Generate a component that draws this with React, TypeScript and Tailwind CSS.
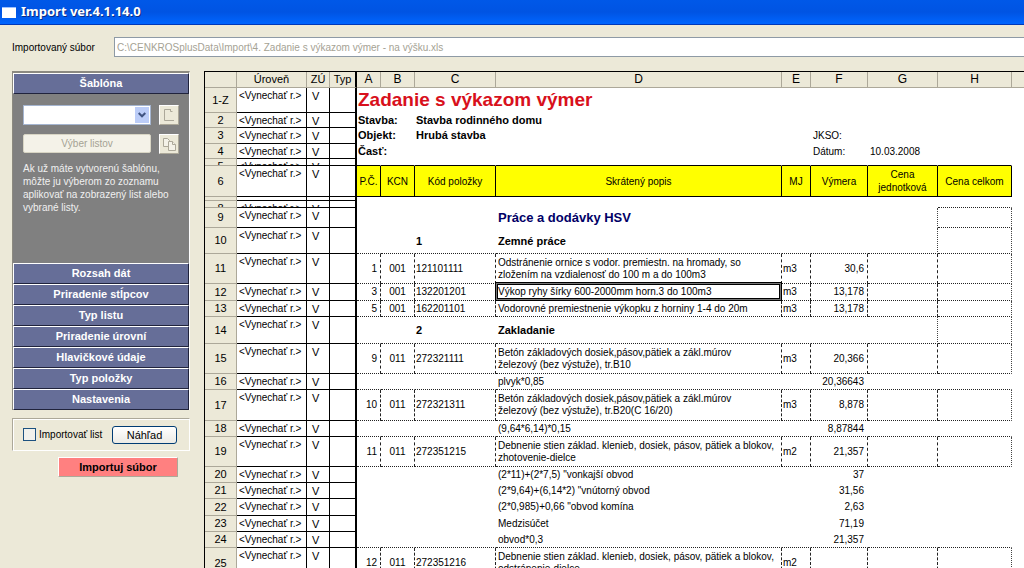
import React from "react";

type Kind = "blank" | "head" | "section" | "item" | "calc";

interface Row {
  n: string;
  h: string;
  kind: Kind;
  cells?: Partial<Record<Col, React.ReactNode>>;
  bottom?: "all" | "solid" | "last";
  box?: boolean;
  short?: boolean;
  collapsed?: boolean;
  selected?: boolean;
}

type Col = "A" | "B" | "C" | "D" | "E" | "F" | "G" | "H";

const COLS: Col[] = ["A", "B", "C", "D", "E", "F", "G", "H"];

function Bold({ children }: { children: React.ReactNode }) {
  return <b className="text-[11px]">{children}</b>;
}

const item = (
  n: string,
  h: string,
  a: string,
  b: string,
  c: string,
  d: string,
  e: string,
  f: string,
  selected = false
): Row => ({
  n,
  h,
  kind: "item",
  bottom: "all",
  selected,
  cells: { A: a, B: b, C: c, D: d, E: e, F: f },
});

const calc = (n: string, h: string, d: string, f: string, bottom?: "all"): Row => ({
  n,
  h,
  kind: "calc",
  bottom,
  cells: { D: d, F: f },
});

const ROWS: Row[] = [
  {
    n: "1-Z",
    h: "h-[25px]",
    kind: "blank",
    cells: {
      A: <span className="text-[19px] font-bold text-[#d8101c]">Zadanie s výkazom výmer</span>,
    },
  },
  { n: "2", h: "h-[15px]", kind: "blank", cells: { A: <Bold>Stavba:</Bold>, C: <Bold>Stavba rodinného domu</Bold> } },
  { n: "3", h: "h-[16px]", kind: "blank", cells: { A: <Bold>Objekt:</Bold>, C: <Bold>Hrubá stavba</Bold>, F: "JKSO:" } },
  { n: "4", h: "h-[15px]", kind: "blank", cells: { A: <Bold>Časť:</Bold>, F: "Dátum:", G: "10.03.2008" } },
  { n: "5", h: "h-[7px]", kind: "blank", short: true, bottom: "solid" },
  {
    n: "6",
    h: "h-[31px]",
    kind: "head",
    bottom: "solid",
    cells: {
      A: "P.Č.",
      B: "KCN",
      C: "Kód položky",
      D: "Skrátený popis",
      E: "MJ",
      F: "Výmera",
      G: "Cena jednotková",
      H: "Cena celkom",
    },
  },
  { n: "7", h: "h-[4px]", kind: "blank", collapsed: true },
  { n: "8", h: "h-[7px]", kind: "blank", short: true, bottom: "last" },
  {
    n: "9",
    h: "h-[20px]",
    kind: "section",
    box: true,
    bottom: "last",
    cells: {
      D: <span className="text-[13px] font-bold text-[#000066]">Práce a dodávky HSV</span>,
    },
  },
  { n: "10", h: "h-[26px]", kind: "section", box: true, bottom: "all", cells: { C: <Bold>1</Bold>, D: <Bold>Zemné práce</Bold> } },
  item("11", "h-[30px]", "1", "001", "121101111", "Odstránenie ornice s vodor. premiestn. na hromady, so\nzložením na vzdialenosť do 100 m a do 100m3", "m3", "30,6"),
  item("12", "h-[17px]", "3", "001", "132201201", "Výkop ryhy šírky 600-2000mm horn.3 do 100m3", "m3", "13,178", true),
  item("13", "h-[16px]", "5", "001", "162201101", "Vodorovné premiestnenie výkopku z horniny 1-4 do 20m", "m3", "13,178"),
  { n: "14", h: "h-[27px]", kind: "section", box: true, bottom: "all", cells: { C: <Bold>2</Bold>, D: <Bold>Zakladanie</Bold> } },
  item("15", "h-[30px]", "9", "011", "272321111", "Betón základových dosiek,pásov,pätiek a zákl.múrov\nželezový (bez výstuže), tr.B10", "m3", "20,366"),
  calc("16", "h-[16px]", "plvyk*0,85", "20,36643", "all"),
  item("17", "h-[31px]", "10", "011", "272321311", "Betón základových dosiek,pásov,pätiek a zákl.múrov\nželezový (bez výstuže), tr.B20(C 16/20)", "m3", "8,878"),
  calc("18", "h-[16px]", "(9,64*6,14)*0,15", "8,87844", "all"),
  item("19", "h-[30px]", "11", "011", "272351215", "Debnenie stien základ. klenieb, dosiek, pásov, pätiek a blokov,\nzhotovenie-dielce", "m2", "21,357"),
  calc("20", "h-[16px]", '(2*11)+(2*7,5) "vonkajší obvod', "37"),
  calc("21", "h-[16px]", '(2*9,64)+(6,14*2) "vnútorný obvod', "31,56"),
  calc("22", "h-[17px]", '(2*0,985)+0,66 "obvod komína', "2,63"),
  calc("23", "h-[16px]", "Medzisúčet", "71,19"),
  calc("24", "h-[16px]", "obvod*0,3", "21,357", "all"),
  item("25", "h-[31px]", "12", "011", "272351216", "Debnenie stien základ. klenieb, dosiek, pásov, pätiek a blokov,\nodstránenie-dielce", "m2", ""),
];

const ALIGN: Record<Col, string> = {
  A: "justify-end pr-[3px]",
  B: "justify-center",
  C: "pl-px",
  D: "pl-[2px]",
  E: "pl-px",
  F: "justify-end pr-[3px]",
  G: "pl-px",
  H: "pl-px",
};

function cellClass(row: Row, col: Col): string {
  const c = ["relative flex items-center whitespace-pre border-transparent border-r border-b", row.h];
  if (row.kind === "head") {
    c.push("justify-center bg-[#ffff00] text-center !whitespace-normal leading-[13px] border-r-black");
  } else if (row.kind === "blank") {
    c.push(col === "A" || col === "C" ? "pl-px" : "pl-[2px]");
  } else {
    c.push(ALIGN[col], "leading-[12px]");
  }
  if (row.kind === "item") {
    c.push(col === "H" ? "[border-right-style:dotted] border-r-[#444]" : "[border-right-style:dashed] border-r-[#222]");
  }
  if (row.box && (col === "G" || col === "H")) c.push("[border-right-style:dotted] border-r-[#444]");
  if (row.bottom === "solid") c.push("border-b-black");
  if (row.bottom === "all" || (row.bottom === "last" && col === "H")) {
    c.push("[border-bottom-style:dotted] border-b-[#222]");
  }
  return c.join(" ");
}

function Sheet() {
  const th = "h-[16px] border-r border-b border-[#aca899] text-center text-[12px] font-normal leading-[15px]";
  return (
    <table className="w-full table-fixed border-separate border-spacing-0 text-[10px] text-black">
      <colgroup>
        <col className="w-[32px]" />
        <col className="w-[70px]" />
        <col className="w-[23px]" />
        <col className="w-[27px]" />
        <col className="w-[24px]" />
        <col className="w-[34px]" />
        <col className="w-[81px]" />
        <col className="w-[286px]" />
        <col className="w-[29px]" />
        <col className="w-[57px]" />
        <col className="w-[70px]" />
        <col className="w-[74px]" />
        <col />
      </colgroup>
      <thead className="bg-[#ece9d8]">
        <tr>
          <th className="p-0"><div className={th} /></th>
          <th className="p-0"><div className={`${th} !text-[11px]`}>Úroveň</div></th>
          <th className="p-0"><div className={`${th} !text-[11px]`}>ZÚ</div></th>
          <th className="p-0"><div className={`${th} border-r-2 border-r-black !text-[11px]`}>Typ</div></th>
          {COLS.map((c) => (
            <th key={c} className="p-0"><div className={th}>{c}</div></th>
          ))}
          <th className="p-0"><div className="h-[16px] border-b border-[#aca899]" /></th>
        </tr>
      </thead>
      <tbody className="bg-white">
        {ROWS.map((row) => {
          const left = `${row.h} overflow-hidden whitespace-nowrap border-r border-b border-black pt-px leading-[14px]`;
          return (
            <tr key={row.n}>
              <th className="p-0 font-normal">
                <div
                  className={`${row.h} flex justify-center overflow-hidden border-r border-b border-[#aca899] bg-[#ece9d8] text-[11px] leading-[15px] ${row.short ? "items-start" : "items-center"}`}
                >
                  {!row.collapsed && row.n}
                </div>
              </th>
              <td className="p-0"><div className={`${left} pl-[2px]`}>{!row.collapsed && "<Vynechať r.>"}</div></td>
              <td className="p-0"><div className={`${left} pl-[5px] text-[11px]`}>{!row.collapsed && "V"}</div></td>
              <td className="p-0"><div className={`${left} border-r-2`} /></td>
              {COLS.map((c) => (
                <td key={c} className="p-0">
                  <div className={cellClass(row, c)}>
                    {row.cells?.[c]}
                    {row.selected && c === "D" && (
                      <span className="absolute -top-[2px] -right-px -bottom-px -left-px border border-black shadow-[inset_0_0_0_1px_#777,inset_0_0_0_2px_#000]" />
                    )}
                  </div>
                </td>
              ))}
              <td className="p-0" />
            </tr>
          );
        })}
      </tbody>
    </table>
  );
}

const BAR =
  "block h-[21px] w-full border border-t-white border-l-white border-r-[#20233c] border-b-[#20233c] bg-[#666e98] text-center text-[11px] leading-[19px] font-bold text-white";

const SECTIONS = ["Rozsah dát", "Priradenie stĺpcov", "Typ listu", "Priradenie úrovní", "Hlavičkové údaje", "Typ položky", "Nastavenia"];

const ICON_BUTTON =
  "flex h-[20px] w-[20px] items-center justify-center border border-t-white border-l-white border-r-[#aca899] border-b-[#aca899] bg-[#ece9d8]";

function Sidebar() {
  return (
    <aside className="w-[178px] shrink-0 text-[10px]">
      <div className="border-t-2 border-r border-l border-t-[#8c8a80] border-r-white border-l-[#8c8a80] bg-[#808080]">
        <button id="template-heading" className={BAR}>Šablóna</button>
        <div className="flex h-[169px] flex-col px-[10px] pt-[11px]">
          <div className="flex justify-between">
            <div className="relative h-[20px] w-[128px]">
              <select
                aria-labelledby="template-heading"
                className="h-full w-full appearance-none border border-[#a5b5d0] bg-white pl-1"
              />
              <span className="pointer-events-none absolute top-[2px] right-[2px] bottom-[2px] flex w-[14px] items-center justify-center bg-[#bccdf8]">
                <svg width="8" height="6" viewBox="0 0 8 6" fill="none" stroke="#3f5380" strokeWidth="2">
                  <path d="M0.7 1 L4 4.3 L7.3 1" />
                </svg>
              </span>
            </div>
            <button className={ICON_BUTTON} aria-label="Nová">
              <svg width="12" height="14" viewBox="0 0 12 14" fill="none" stroke="#aca899">
                <path d="M8 1.5 H1.5 V12.5 H11" />
                <path d="M7.5 1.5 V3.5 H9.5" />
              </svg>
            </button>
          </div>
          <div className="mt-[9px] flex justify-between">
            <button className="h-[19px] w-[128px] rounded-[2px] border border-[#d8d5c4] bg-[#f4f2e8] text-[10px] leading-[17px] text-[#a5a294]">
              Výber listov
            </button>
            <button className={ICON_BUTTON} aria-label="Kopírovať">
              <svg width="13" height="13" viewBox="0 0 13 13" fill="#f4f2e8" stroke="#aca899">
                <path d="M0.5 0.5 H4.5 L6.5 2.5 V8.5 H0.5 Z" />
                <path d="M5.5 3.5 H9.5 L12.5 6.5 V12.5 H5.5 Z" />
                <path d="M9.5 3.5 V6.5 H12.5" />
              </svg>
            </button>
          </div>
          <p className="mt-[8px] leading-[13px] whitespace-nowrap text-[#f0f0f0]">
            Ak už máte vytvorenú šablónu,
            <br />
            môžte ju výberom zo zoznamu
            <br />
            aplikovať na zobrazený list alebo
            <br />
            vybrané listy.
          </p>
        </div>
        {SECTIONS.map((s) => (
          <button key={s} className={BAR}>{s}</button>
        ))}
      </div>
      <div className="mt-[8px] flex h-[33px] items-center border border-t-[#aca899] border-r-white border-b-white border-l-[#aca899] pl-[10px] shadow-[inset_1px_1px_0_#fff]">
        <label className="flex items-center gap-[3px] whitespace-nowrap">
          <input type="checkbox" className="h-[13px] w-[13px] appearance-none border border-[#1c5180] bg-[#f1f1ec]" />
          Importovať list
        </label>
        <button className="mr-[12px] ml-auto h-[18px] w-[65px] rounded-[3px] border border-[#003c74] bg-gradient-to-b from-white to-[#ecebe5] text-[11px] leading-[16px]">
          Náhľad
        </button>
      </div>
      <button className="mt-[6px] ml-[46px] block h-[20px] w-[120px] border border-t-white border-l-white border-r-[#aca899] border-b-[#aca899] bg-[#ff8080] text-[11px] leading-[18px] font-bold">
        Importuj súbor
      </button>
    </aside>
  );
}

export default function App() {
  return (
    <div className="flex h-screen flex-col overflow-hidden bg-[#ece9d8] font-['Liberation_Sans',Arial,sans-serif] text-black">
      <header className="flex h-[25px] shrink-0 items-center gap-[5px] border-b border-[#0038b8] bg-gradient-to-b from-[#0058e8] via-[#0054e3] to-[#0066ff] pl-[2px]">
        <span className="h-[11px] w-[14px] border-t border-[#9cc0ff] bg-white" />
        <h1 className="font-['Noto_Sans',sans-serif] text-[13px] font-bold text-white [text-shadow:1px_1px_#0b2d85]">
          Import ver.4.1.14.0
        </h1>
      </header>
      <div className="flex shrink-0 items-center pt-[12px] pl-3">
        <label htmlFor="file" className="w-[102px] text-[10px]">Importovaný súbor</label>
        <input
          id="file"
          readOnly
          className="h-[20px] min-w-0 flex-1 border border-r-0 border-[#8e9aa5] bg-white pl-[2px] text-[10px] text-[#a5a294]"
          value="C:\CENKROSplusData\Import\4. Zadanie s výkazom výmer - na výšku.xls"
        />
      </div>
      <div className="mt-[14px] flex min-h-0 flex-1 gap-[14px] pl-3">
        <Sidebar />
        <main className="min-w-0 flex-1 overflow-hidden border-t border-l border-black bg-white">
          <Sheet />
        </main>
      </div>
    </div>
  );
}
